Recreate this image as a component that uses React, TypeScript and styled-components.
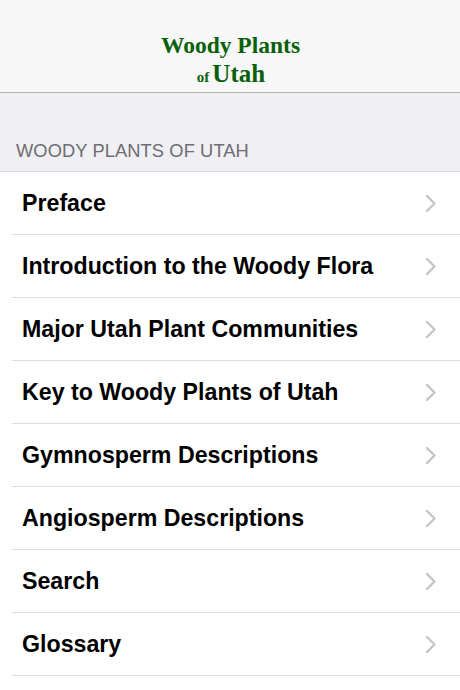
import React from "react";
import styled, { createGlobalStyle } from "styled-components";

const Global = createGlobalStyle`
  html, body { margin: 0; padding: 0; background: #ffffff; }
  body { font-family: "Liberation Sans", Arial, sans-serif; -webkit-font-smoothing: antialiased; }
`;

const Screen = styled.div`
  width: 460px;
  height: 690px;
  overflow: hidden;
  display: flex;
  flex-direction: column;
  background: #ffffff;
`;

const NavBar = styled.header`
  height: 93px;
  flex: none;
  background: #f7f7f7;
  border-bottom: 1px solid #b2b2b2;
  display: flex;
  flex-direction: column;
  align-items: center;
  justify-content: flex-start;
  padding-top: 32px;
  box-sizing: border-box;
  font-family: "Liberation Serif", "Times New Roman", serif;
  font-weight: 700;
  color: #08600a;
`;

const TitleLine = styled.div`
  font-size: 23.5px;
  line-height: 26px;
  margin-left: 1px;
`;

const SubLine = styled.div`
  display: flex;
  align-items: baseline;
  gap: 3px;
  line-height: 28px;
  margin: 2px 0 0 2px;
`;

const Small = styled.span`
  font-size: 15px;
`;

const Big = styled.span`
  font-size: 25px;
`;

const SectionHeader = styled.div`
  flex: none;
  height: 78px;
  background: #efeff4;
  display: flex;
  align-items: flex-end;
  padding: 0 0 9px 16px;
  box-sizing: border-box;
  font-size: 18.3px;
  color: #6d6d72;
  letter-spacing: 0.1px;
`;

const List = styled.ul`
  list-style: none;
  margin: 0;
  padding: 0;
  flex: 1;
  background: #ffffff;
  border-top: 1px solid #dcdce0;
`;

const Row = styled.li`
  position: relative;
  height: 63px;
  display: flex;
  align-items: center;
  justify-content: space-between;
  padding: 0 22px 0 22px;
  box-sizing: border-box;
  &::after {
    content: "";
    position: absolute;
    left: 12px;
    right: 0;
    bottom: 0;
    height: 1px;
    background: #dedee2;
  }
`;

const Label = styled.span`
  font-size: 23.2px;
  font-weight: 700;
  color: #000000;
`;

const Chevron = () => (
  <svg width="12" height="19" viewBox="0 0 12 19" style={{ marginRight: 1 }}>
    <path d="M2 2 L9.5 9.5 L2 17" fill="none" stroke="#c4c4c9" strokeWidth="2.4" strokeLinecap="round" strokeLinejoin="round" />
  </svg>
);

const items = [
  "Preface",
  "Introduction to the Woody Flora",
  "Major Utah Plant Communities",
  "Key to Woody Plants of Utah",
  "Gymnosperm Descriptions",
  "Angiosperm Descriptions",
  "Search",
  "Glossary",
];

export default function App() {
  return (
    <>
      <Global />
      <Screen>
        <NavBar>
          <TitleLine>Woody Plants</TitleLine>
          <SubLine>
            <Small>of</Small>
            <Big>Utah</Big>
          </SubLine>
        </NavBar>
        <SectionHeader>WOODY PLANTS OF UTAH</SectionHeader>
        <List>
          {items.map((t) => (
            <Row key={t}>
              <Label>{t}</Label>
              <Chevron />
            </Row>
          ))}
        </List>
      </Screen>
    </>
  );
}
